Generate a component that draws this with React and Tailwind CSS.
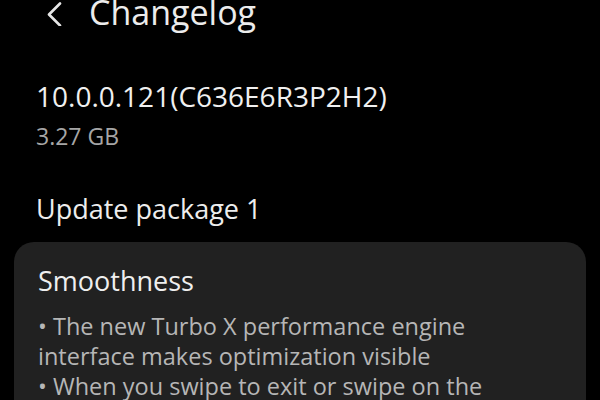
export default function App() {
  return (
    <div className="h-[400px] w-[600px] overflow-hidden bg-black font-['Open_Sans',sans-serif] text-[#ececec]">
      {/* header */}
      <header className="-mt-[5px] flex h-[34px] items-center">
        <svg className="mt-[4px] ml-[44px] h-[24px] w-[20px]" viewBox="0 0 20 24" fill="none">
          <path d="M16 1.5 L5 12.5 L16 23.5" stroke="#e6e6e6" strokeWidth="2.6" strokeLinecap="round" strokeLinejoin="round" />
        </svg>
        <h1 className="ml-[25px] text-[34px] leading-[34px] font-medium">Changelog</h1>
      </header>

      <section className="mt-[50px] px-[36px]">
        <p className="text-[28px] leading-[34px] text-[#f0f0f0]">10.0.0.121(C636E6R3P2H2)</p>
        <p className="mt-[9px] text-[23px] leading-[28px] text-[#a6a6a6]">3.27 GB</p>
      </section>

      <p className="mt-[44px] px-[36px] text-[27px] leading-[30px] text-[#ededed]">Update package 1</p>

      <div className="mx-[14px] mt-[18px] rounded-[20px] bg-[#212121] pt-[22px] pr-[48px] pb-[20px] pl-[24px]">
        <h2 className="text-[27px] leading-[34px] text-[#efefef]">Smoothness</h2>
        <div className="mt-[13px] text-[23.5px] leading-[30px] text-[#b6b6b6]">
          <p>• The new Turbo X performance engine interface makes optimization visible</p>
          <p>• When you swipe to exit or swipe on the</p>
        </div>
      </div>
    </div>
  );
}
